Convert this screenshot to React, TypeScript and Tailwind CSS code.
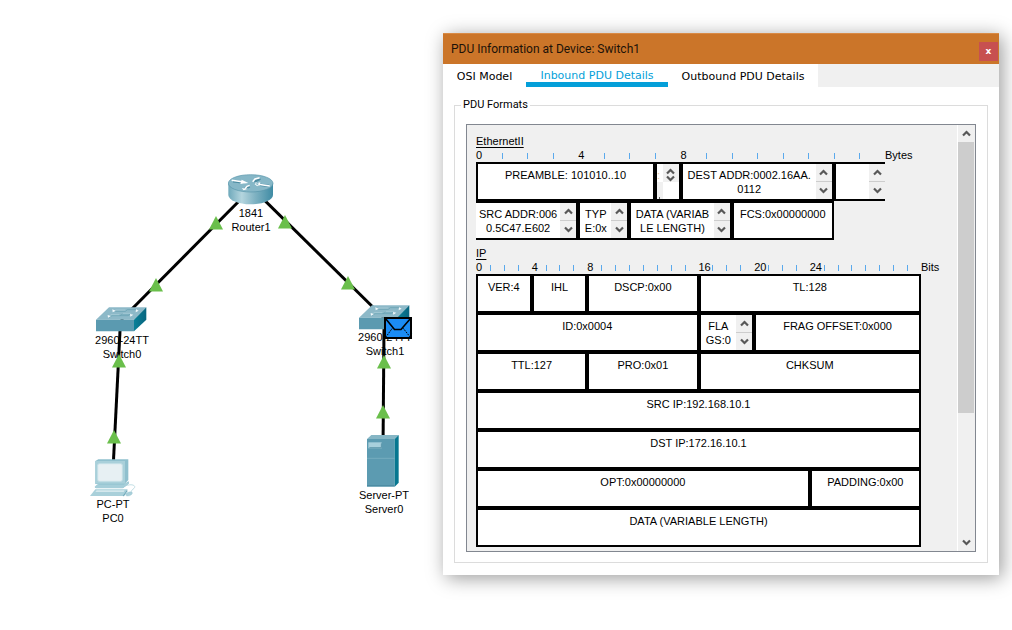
import React from "react";

type Point = { x: number; y: number };

const links: [Point, Point][] = [
  [{ x: 251, y: 189 }, { x: 121, y: 320 }],
  [{ x: 251, y: 187 }, { x: 384, y: 318 }],
  [{ x: 120, y: 331 }, { x: 113, y: 470 }],
  [{ x: 384, y: 328 }, { x: 383, y: 450 }],
];

const markers: Point[] = [
  { x: 216, y: 216 },
  { x: 285, y: 215 },
  { x: 156, y: 278 },
  { x: 119, y: 354 },
  { x: 348, y: 276 },
  { x: 384, y: 355 },
  { x: 114, y: 430 },
  { x: 383, y: 405 },
];

function RouterIcon() {
  return (
    <svg width="46" height="31" viewBox="83 41 138 93" aria-hidden="true">
      <defs>
        <linearGradient id="routerBody" x1="0" x2="1">
          <stop offset="0" stopColor="#6fa9bb" />
          <stop offset="0.3" stopColor="#b4d5de" />
          <stop offset="0.6" stopColor="#7fb2c2" />
          <stop offset="1" stopColor="#3f8ba4" />
        </linearGradient>
      </defs>
      <path d="M84 68v36c0 15 30 28 67 28s67-13 67-28V68z" fill="url(#routerBody)" />
      <ellipse cx="151" cy="69" rx="67" ry="26" fill="#86b7c7" stroke="#5796ab" strokeWidth="2" />
      <g stroke="#4e8da3" strokeWidth="7" fill="none">
        <path d="M98 63l34 4M180 55l-18 9M206 77l-32-4M148 78l-14 7" />
      </g>
      <g stroke="#fff" strokeWidth="4.500" fill="none">
        <path d="M94 60l36 5M178 52l-14 4-7 8M208 77l-34-5M148 75l-8 3-6 7" />
      </g>
      <path d="M124 58l20 10-24 3zM176 70l-10-4-3 6 8 6zM164 70l16-4-3 11zM124 84l6 6 14-5z" fill="#fff" />
    </svg>
  );
}

function SwitchIcon() {
  return (
    <svg width="51" height="25" viewBox="48 112 153 75" aria-hidden="true">
      <defs>
        <linearGradient id="switchSide" x1="0" x2="1">
          <stop offset="0" stopColor="#0a8098" />
          <stop offset="1" stopColor="#07657f" />
        </linearGradient>
      </defs>
      <path d="M48 150L87 113h112l-37 37z" fill="#8db9c8" />
      <path d="M48 150h114v35H48z" fill="#5b9ab0" />
      <path d="M162 150l37-37v37l-37 35z" fill="url(#switchSide)" />
      <g stroke="#6ba3b5" strokeWidth="2.500" fill="none">
        <path d="M106 125h30l6-5h26M120 138h24l6-4M88 143l8-5h24l8-5h26" />
      </g>
      <g stroke="#a9cdd8" strokeWidth="2.500" fill="none">
        <path d="M106 121h30M92 135h26M128 131h26" />
      </g>
      <path d="M97 119l10 4-9 5zM168 119l8 4-9 5zM83 136l10 3-9 5zM150 133l10 2-9 6z" fill="#f4fafc" />
    </svg>
  );
}

function PcIcon() {
  return (
    <svg width="46" height="38" viewBox="30 116 138 114" aria-hidden="true">
      <path d="M46 122l9-5h90v62l-11 12H46z" fill="#8fc0ce" />
      <path d="M46 122h89v68H46z" fill="#a9d0da" />
      <rect x="53" y="130" width="74" height="53" rx="5" fill="#e7f0f3" stroke="#c4dfe6" strokeWidth="3" />
      <path d="M56 191h78l12-8v7l-16 12H44z" fill="#77b1c1" />
      <path d="M44 199l8-7h80l12-7v8l-16 11H48z" fill="#a5ced9" />
      <path d="M46 207h96l-12 20H30z" fill="#a9d0da" />
      <path d="M50 210h84l-3 5H46z" fill="#d4e8ed" />
      <path d="M128 227l14-20v6l-10 15z" fill="#6faabb" />
      <path d="M142 195c12-4 24-1 22 6-1 5-10 6-10 13" fill="none" stroke="#b6d7df" strokeWidth="2.500" />
      <path d="M137 222c2-5 12-9 18-7 6 3-2 12-12 12-4 0-7-2-6-5z" fill="#a9d0da" stroke="#8bbdca" strokeWidth="1" />
    </svg>
  );
}

function ServerIcon() {
  return (
    <svg width="32" height="52" viewBox="67 105 96 156" aria-hidden="true">
      <path d="M67 117l13-12h82l-12 12z" fill="#86b6c5" />
      <path d="M67 117h83v143H67z" fill="#5c9bb1" />
      <path d="M150 117l12-12v143l-12 12z" fill="#077790" />
      <path d="M67 175h83" stroke="#7bb0c1" strokeWidth="2.5" />
      <path d="M71 127h40v18H71z" fill="#a9d0dc" />
      <path d="M74 143h36v-13" fill="none" stroke="#3c7e95" strokeWidth="2" />
      <path d="M67 257h83" stroke="#4b8aa0" strokeWidth="3" />
    </svg>
  );
}

function EnvelopeIcon() {
  return (
    <svg width="28" height="22" viewBox="0 0 28 22" aria-hidden="true">
      <rect x="1" y="1" width="26" height="20" fill="#1b8cf5" stroke="#000" strokeWidth="2" />
      <path d="M1.500 1.500L10.500 12.500h6.500L26.500 1.500" fill="none" stroke="#000" strokeWidth="1.600" />
      <path d="M1.500 20.500L8.500 11M26.500 20.500L19 11" fill="none" stroke="#000" strokeWidth="1" strokeDasharray="1.800 1" />
    </svg>
  );
}

function Label({ place, lines }: { place: string; lines: [string, string] }) {
  return (
    <div className={`absolute w-20 text-center ${place}`}>
      {lines[0]}
      <br />
      {lines[1]}
    </div>
  );
}

function Topology() {
  return (
    <section aria-label="Network topology" className="relative w-[443px] shrink-0">
      <Label place="left-[211px] top-[206px]" lines={["1841", "Router1"]} />
      <Label place="left-[82px] top-[333px]" lines={["2960-24TT", "Switch0"]} />
      <Label place="left-[345px] top-[330px]" lines={["2960-24TT", "Switch1"]} />
      <Label place="left-[73px] top-[497px]" lines={["PC-PT", "PC0"]} />
      <Label place="left-[344px] top-[488px]" lines={["Server-PT", "Server0"]} />
      <svg className="absolute left-0 top-0" width="443" height="630" aria-hidden="true">
        {links.map(([a, b], i) => (
          <line key={i} x1={a.x} y1={a.y} x2={b.x} y2={b.y} stroke="#000" strokeWidth="3" />
        ))}
        {markers.map((m, i) => (
          <path key={i} d={`M${m.x} ${m.y}l7 13.500h-14z`} fill="#6abf4b" />
        ))}
      </svg>
      <div className="absolute left-[228px] top-[174px]"><RouterIcon /></div>
      <div className="absolute left-[96px] top-[307px]"><SwitchIcon /></div>
      <div className="absolute left-[359px] top-[305px]"><SwitchIcon /></div>
      <div className="absolute left-[90px] top-[459px]"><PcIcon /></div>
      <div className="absolute left-[367px] top-[435px]"><ServerIcon /></div>
      <div className="absolute left-[384px] top-[317px]"><EnvelopeIcon /></div>
    </section>
  );
}

function Chevron({ down = false }: { down?: boolean }) {
  return (
    <svg width="9" height="7" viewBox="0 0 9 7" aria-hidden="true">
      <path d={down ? "M1 1.500l3.500 3.500L8 1.500" : "M1 5.500L4.500 2 8 5.500"} fill="none" stroke="#585858" strokeWidth="2.200" />
    </svg>
  );
}

function MiniScroller({ name }: { name: string }) {
  return (
    <div className="flex w-4 shrink-0 flex-col bg-[#f0f0f0]">
      <button type="button" aria-label={`Scroll ${name} up`} className="flex flex-1 items-center justify-center border-b border-[#cdcdcd]">
        <Chevron />
      </button>
      <button type="button" aria-label={`Scroll ${name} down`} className="flex flex-1 items-center justify-center">
        <Chevron down />
      </button>
    </div>
  );
}

type CellProps = { text: string; span: string; edges?: string; scroll?: string };

function Cell({ text, span, edges = "border-2", scroll }: CellProps) {
  return (
    <div className={`flex h-[39px] border-black bg-white ${edges} ${span}`}>
      <div className="min-w-0 flex-1 whitespace-pre pt-1 text-center">{text}</div>
      {scroll && <MiniScroller name={scroll} />}
    </div>
  );
}

function DelimiterCell() {
  return (
    <div className="grid h-[39px] grid-cols-[6px_1fr] grid-rows-[18px_1fr] border-2 border-black bg-white">
      <div className="overflow-hidden pt-1 text-[#e8c49a]">:</div>
      <div className="flex flex-col items-center justify-between bg-[#f0f0f0] pt-1">
        <button type="button" aria-label="Scroll delimiter up" className="flex"><Chevron /></button>
        <button type="button" aria-label="Scroll delimiter down" className="flex"><Chevron down /></button>
      </div>
      <div className="flex items-end justify-center bg-[#f0f0f0]">
        <div className="h-0.5 w-px bg-[#606060]" />
      </div>
    </div>
  );
}

function Ruler({ count, marks, unit, columns }: { count: number; marks: number[]; unit: string; columns: string }) {
  return (
    <div className="flex">
      <div className={`grid h-[14px] ${columns}`}>
        {Array.from({ length: count }, (_, i) =>
          marks.includes(i) ? (
            <span key={i} className="w-0">{i}</span>
          ) : (
            <span key={i} className="mt-[5px] h-1.5 w-px bg-[#5aa9ec]" />
          )
        )}
      </div>
      <span>{unit}</span>
    </div>
  );
}

const ethernetColumns = "w-[409px] grid-cols-16";
const ipColumns = "w-[445px] grid-cols-32";

const ipFields: CellProps[] = [
  { text: "VER:4", span: "col-span-4" },
  { text: "IHL", span: "col-span-4" },
  { text: "DSCP:0x00", span: "col-span-8" },
  { text: "TL:128", span: "col-span-16" },
  { text: "ID:0x0004", span: "col-span-16" },
  { text: "FLA\nGS:0", span: "col-span-4", scroll: "flags" },
  { text: "FRAG OFFSET:0x000", span: "col-span-12" },
  { text: "TTL:127", span: "col-span-8" },
  { text: "PRO:0x01", span: "col-span-8" },
  { text: "CHKSUM", span: "col-span-16" },
  { text: "SRC IP:192.168.10.1", span: "col-span-32" },
  { text: "DST IP:172.16.10.1", span: "col-span-32" },
  { text: "OPT:0x00000000", span: "col-span-24" },
  { text: "PADDING:0x00", span: "col-span-8" },
  { text: "DATA (VARIABLE LENGTH)", span: "col-span-32" },
];

function PduFormats() {
  return (
    <div className="flex border border-[#828790] bg-[#f0f0f0]">
      <div className="min-w-0 flex-1 pb-1 pl-[9px] pt-[9px]">
        <h2 className="underline underline-offset-2">EthernetII</h2>
        <Ruler count={16} marks={[0, 4, 8]} unit="Bytes" columns={ethernetColumns} />
        <div className={`grid ${ethernetColumns}`}>
          <Cell text="PREAMBLE: 101010..10" span="col-span-7" />
          <DelimiterCell />
          <Cell text={"DEST ADDR:0002.16AA.\n0112"} span="col-span-6" scroll="destination address" />
          <Cell text="" span="col-span-2" edges="border-y-2 border-l-2" scroll="source address start" />
          <Cell text={"SRC ADDR:006\n0.5C47.E602"} span="col-span-4" edges="border-y-2 border-r-2" scroll="source address" />
          <Cell text={"TYP\nE:0x"} span="col-span-2" scroll="type" />
          <Cell text={"DATA (VARIAB\nLE LENGTH)"} span="col-span-4" scroll="data" />
          <Cell text="FCS:0x00000000" span="col-span-4" />
        </div>
        <h2 className="mt-1.5 underline underline-offset-2">IP</h2>
        <Ruler count={32} marks={[0, 4, 8, 16, 20, 24]} unit="Bits" columns={ipColumns} />
        <div className={`grid ${ipColumns}`}>
          {ipFields.map((f) => (
            <Cell key={f.text} {...f} />
          ))}
        </div>
      </div>
      <div className="flex w-[18px] shrink-0 flex-col border-l border-white">
        <button type="button" aria-label="Scroll up" className="flex h-[17px] items-center justify-center"><Chevron /></button>
        <div className="flex-1 pr-px">
          <div className="h-[271px] bg-[#cdcdcd]" />
        </div>
        <button type="button" aria-label="Scroll down" className="flex h-[17px] items-center justify-center"><Chevron down /></button>
      </div>
    </div>
  );
}

export default function App() {
  return (
    <main className="flex min-h-screen items-start overflow-hidden bg-white font-['Liberation_Sans',sans-serif] text-[11px] leading-[14px] text-black">
      <Topology />
      <section
        role="dialog"
        aria-label="PDU Information at Device: Switch1"
        className="mr-[13px] mt-[33px] min-w-[556px] flex-1 bg-white shadow-[3px_3px_18px_rgba(0,0,0,0.4)]"
      >
        <header className="flex h-[31px] items-center justify-between border-t border-[#d98a45] bg-[#cb7529] pl-2 pr-px">
          <h1 className="font-[Roboto,sans-serif] text-xs text-[#1c1208]">PDU Information at Device: Switch1</h1>
          <button type="button" aria-label="Close" className="mt-1 h-[19px] w-[19px] bg-[#c75050] font-['DejaVu_Sans',sans-serif] text-[9px] font-bold leading-3 text-white">
            x
          </button>
        </header>
        <div role="tablist" className="flex h-[23px] bg-[#f0f0f0] font-['DejaVu_Sans',sans-serif]">
          <button type="button" role="tab" aria-selected="false" className="w-[83px] bg-white pt-0.5">OSI Model</button>
          <button type="button" role="tab" aria-selected="true" className="w-[142px] border-b-[5px] border-[#049fd9] bg-white pt-[5px] text-[#049fd9]">
            Inbound PDU Details
          </button>
          <button type="button" role="tab" aria-selected="false" className="w-[150px] bg-white pt-0.5">Outbound PDU Details</button>
        </div>
        <div className="px-[11px] pb-3 pt-[11px]">
          <fieldset className="min-w-0 border border-[#dcdcdc] px-[11px] pb-2.5">
            <legend className="-ml-[5px] px-0.5 font-[Roboto,sans-serif]">PDU Formats</legend>
            <div className="pt-3">
              <PduFormats />
            </div>
          </fieldset>
        </div>
      </section>
    </main>
  );
}
